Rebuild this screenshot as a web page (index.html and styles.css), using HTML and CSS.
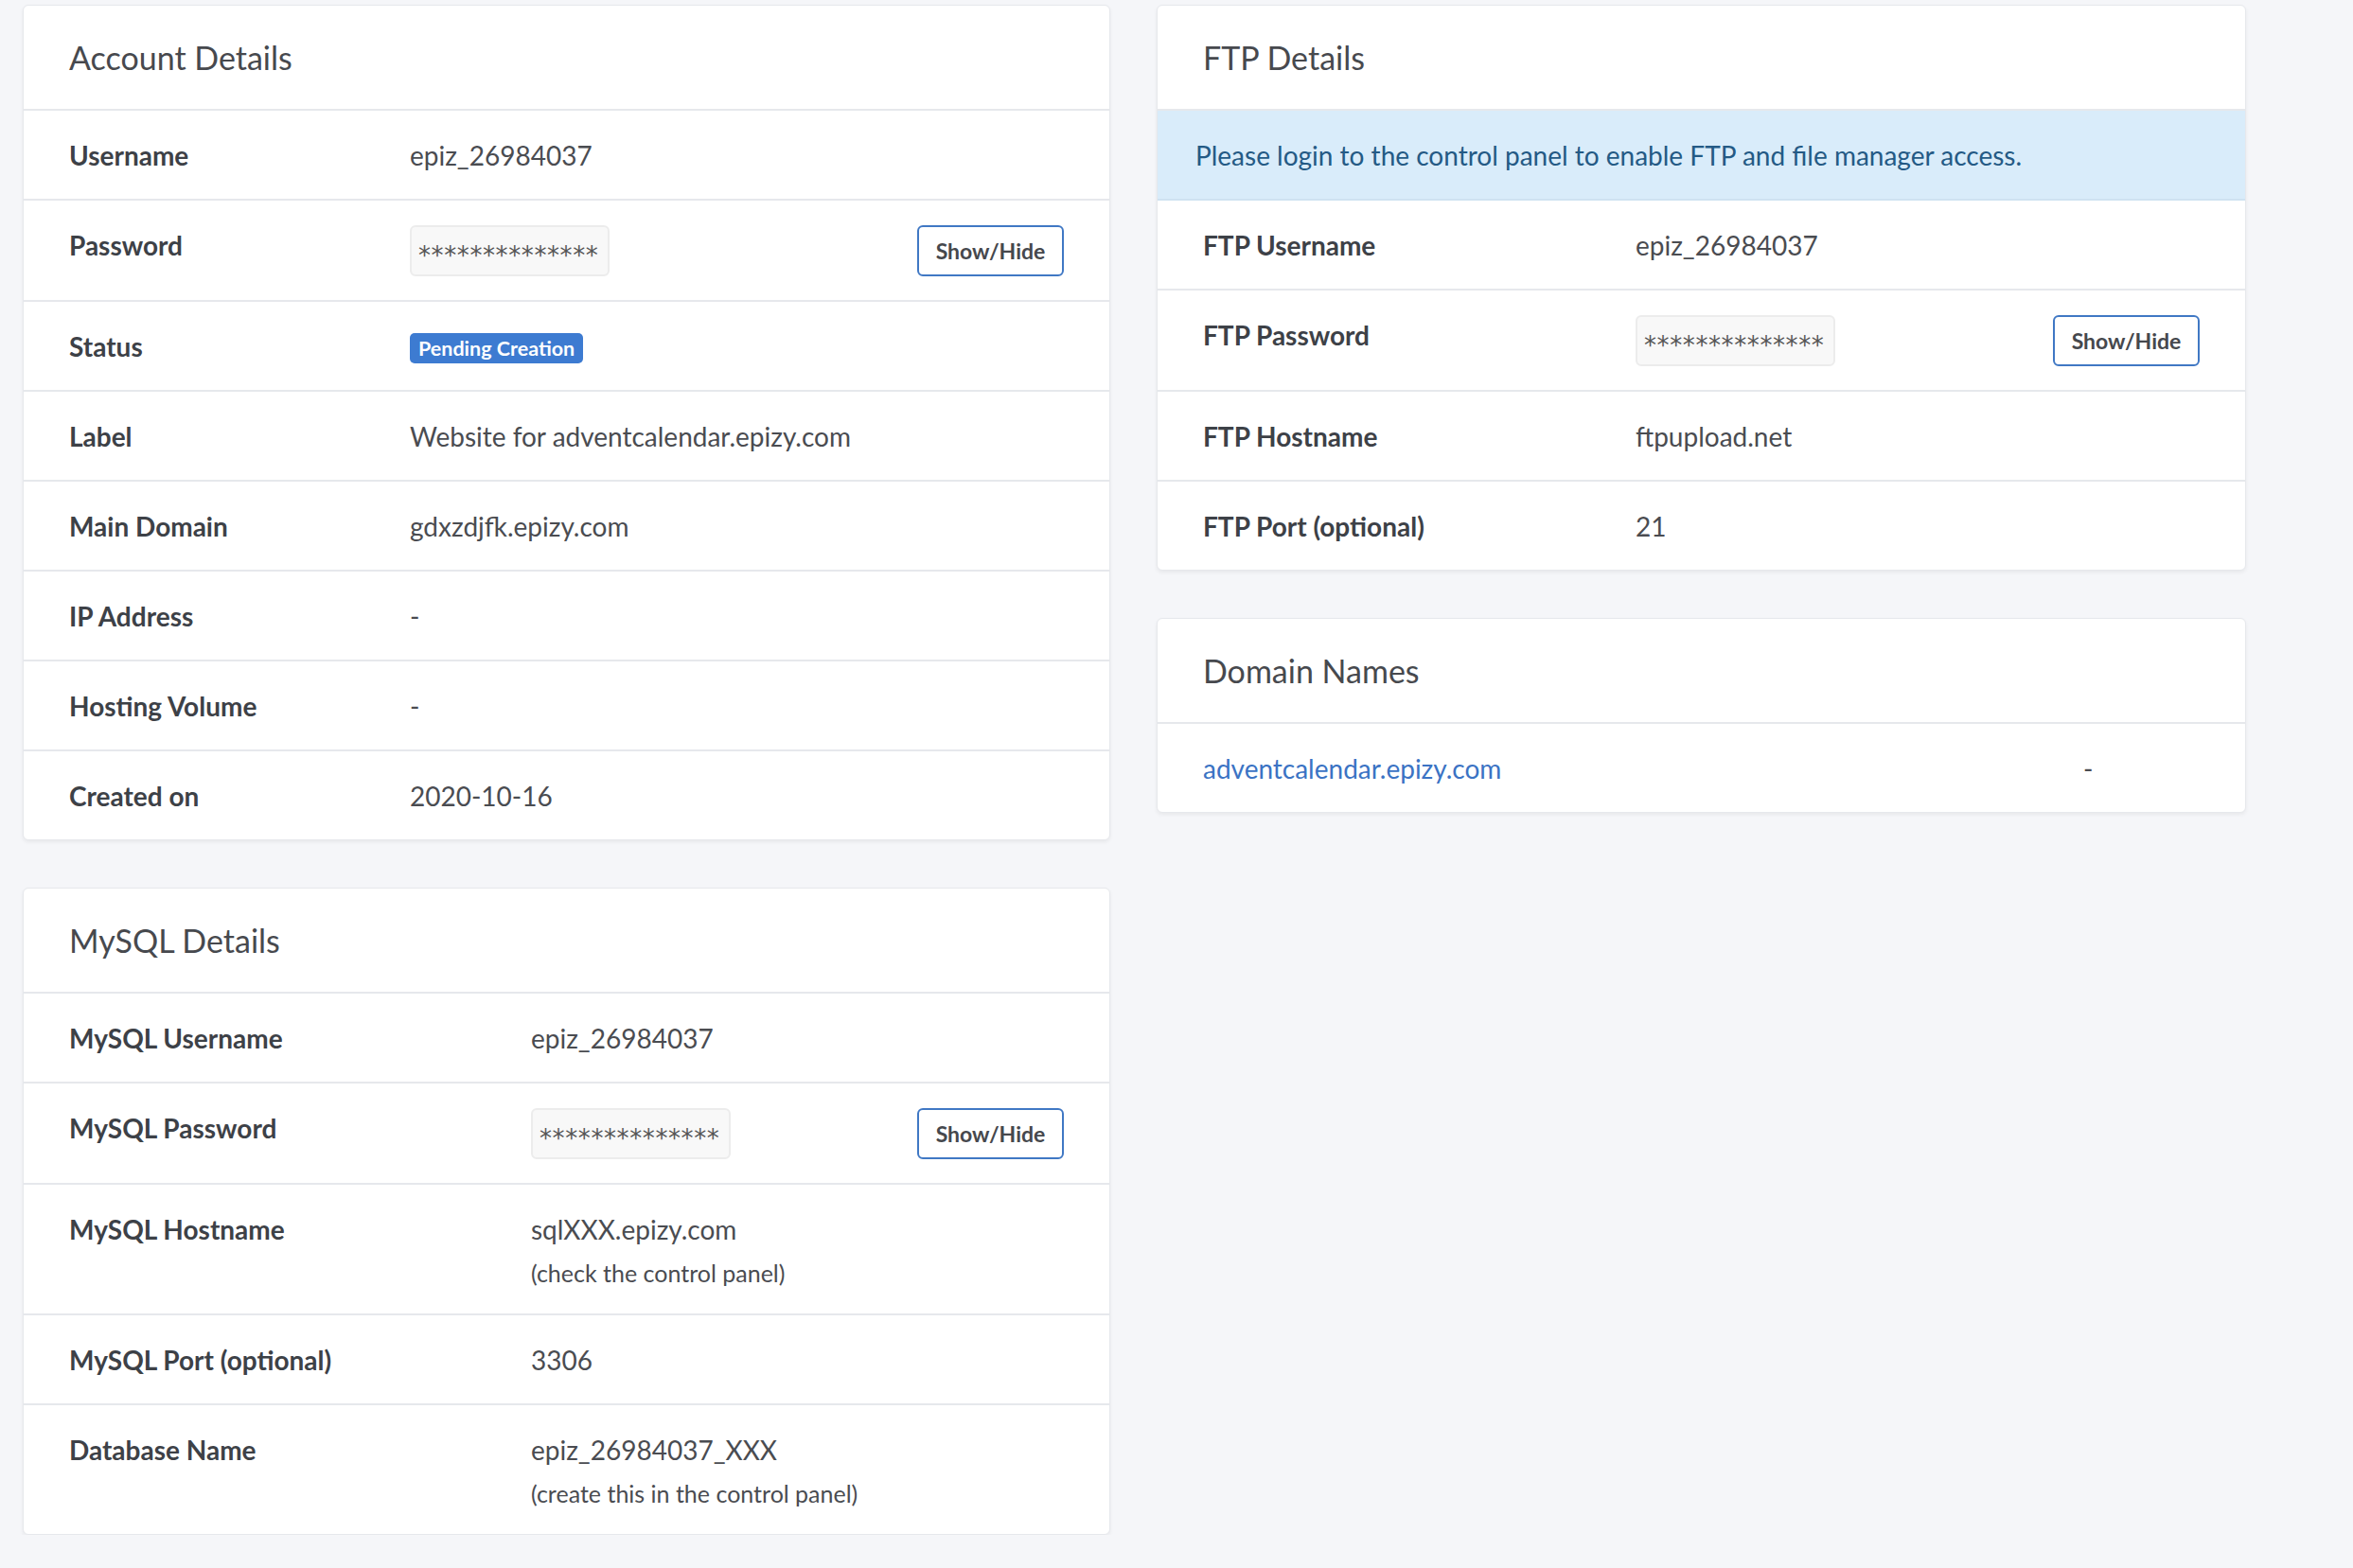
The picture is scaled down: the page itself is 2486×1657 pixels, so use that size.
FILE: index.html
```html
<!DOCTYPE html>
<html lang="en">
<head>
<meta charset="utf-8">
<title>Account</title>
<link rel="stylesheet" href="styles.css">
</head>
<body>
<div class="page">
  <div class="col">
    <section class="card">
      <div class="card-header"><h3>Account Details</h3></div>
      <div class="rows acct">
        <div class="row split"><div class="label">Username</div><div class="value">epiz_26984037</div></div>
        <div class="row"><div class="label">Password</div><div class="value"><span class="secret">**************</span></div><div class="action"><button class="btn">Show/Hide</button></div></div>
        <div class="row"><div class="label">Status</div><div class="value"><span class="badge">Pending Creation</span></div></div>
        <div class="row"><div class="label">Label</div><div class="value">Website for adventcalendar.epizy.com</div></div>
        <div class="row"><div class="label">Main Domain</div><div class="value">gdxzdjfk.epizy.com</div></div>
        <div class="row"><div class="label">IP Address</div><div class="value">-</div></div>
        <div class="row"><div class="label">Hosting Volume</div><div class="value">-</div></div>
        <div class="row"><div class="label">Created on</div><div class="value">2020-10-16</div></div>
      </div>
    </section>
    <section class="card">
      <div class="card-header"><h3>MySQL Details</h3></div>
      <div class="rows mysql">
        <div class="row split"><div class="label">MySQL Username</div><div class="value">epiz_26984037</div></div>
        <div class="row"><div class="label">MySQL Password</div><div class="value"><span class="secret">**************</span></div><div class="action"><button class="btn">Show/Hide</button></div></div>
        <div class="row"><div class="label">MySQL Hostname</div><div class="value">sqlXXX.epizy.com<div class="note">(check the control panel)</div></div></div>
        <div class="row"><div class="label">MySQL Port (optional)</div><div class="value">3306</div></div>
        <div class="row"><div class="label">Database Name</div><div class="value">epiz_26984037_XXX<div class="note">(create this in the control panel)</div></div></div>
      </div>
    </section>
  </div>
  <div class="col">
    <section class="card">
      <div class="card-header"><h3>FTP Details</h3></div>
      <div class="alert">Please login to the control panel to enable FTP and file manager access.</div>
      <div class="rows ftp">
        <div class="row split"><div class="label">FTP Username</div><div class="value">epiz_26984037</div></div>
        <div class="row"><div class="label">FTP Password</div><div class="value"><span class="secret">**************</span></div><div class="action"><button class="btn">Show/Hide</button></div></div>
        <div class="row"><div class="label">FTP Hostname</div><div class="value">ftpupload.net</div></div>
        <div class="row"><div class="label">FTP Port (optional)</div><div class="value">21</div></div>
      </div>
    </section>
    <section class="card">
      <div class="card-header"><h3>Domain Names</h3></div>
      <div class="rows domains">
        <div class="row"><div class="label"><a href="#" class="link">adventcalendar.epizy.com</a></div><div class="value">-</div></div>
      </div>
    </section>
  </div>
</div>
</body>
</html>
```

FILE: styles.css
```css
html, body {
  margin: 0;
  padding: 0;
  background: #f5f6f9;
}
body {
  font-family: "Source Sans Pro", Lato, "Noto Sans", sans-serif;
  font-size: 28px;
  line-height: 42px;
  color: #46484d;
}
.page {
  display: grid;
  grid-template-columns: 1149px 1151px;
  column-gap: 49px;
  padding: 5px 0 0 24px;
  align-items: start;
}
.col {
  display: flex;
  flex-direction: column;
  gap: 50px;
}
.card {
  background: #fff;
  border: 1px solid #e6e8ec;
  border-radius: 6px;
  box-shadow: 0 2px 4px rgba(0, 0, 0, 0.06);
  overflow: hidden;
}
.card-header {
  padding: 34px 48px 34px 48px;
  border-bottom: 2px solid #e6e8ec;
}
.card-header h3 {
  margin: 0;
  font-size: 34px;
  line-height: 41px;
  font-weight: 400;
  color: #47494e;
}
.alert {
  background: #d9ecfa;
  color: #245a85;
  padding: 26px 40px 25px 40px;
  border-bottom: 2px solid #cfe2f1;
  font-size: 28px;
  line-height: 42px;
}
.row {
  display: grid;
  grid-template-columns: var(--lw) 1fr auto;
  align-items: start;
  border-bottom: 2px solid #e6e8ec;
}
.row:last-child {
  border-bottom: none;
}
.acct { --lw: 408px; }
.mysql { --lw: 536px; }
.ftp { --lw: 505px; }
.domains { --lw: 978px; }
.label {
  padding: 26px 0 25px 48px;
  font-weight: 700;
  color: #3d4147;
}
.value {
  padding: 26px 0 25px 0;
  color: #4a4c51;
}
.action {
  padding: 26px 48px 25px 0;
}
.secret {
  display: inline-block;
  box-sizing: border-box;
  height: 54px;
  width: 211px;
  padding: 0 7px;
  background: #f8f8f8;
  border: 2px solid #ececec;
  border-radius: 6px;
  font-family: "DejaVu Sans", sans-serif;
  font-size: 26px;
  line-height: 60px;
  letter-spacing: 0.6px;
  color: #555;
  vertical-align: top;
  overflow: hidden;
  white-space: nowrap;
}
.btn {
  display: block;
  box-sizing: border-box;
  width: 155px;
  height: 54px;
  background: #fff;
  border: 2px solid #4078c4;
  border-radius: 6px;
  font-family: inherit;
  font-size: 23px;
  font-weight: 700;
  color: #46484d;
  padding: 0;
}
.badge {
  display: inline-block;
  background: #3d7bd1;
  color: #fff;
  font-size: 21.5px;
  font-weight: 700;
  line-height: 32px;
  padding: 0 9px;
  border-radius: 5px;
  vertical-align: 1px;
}
.note {
  font-size: 25px;
  line-height: 36px;
  margin-top: 7px;
}
.link {
  color: #3b73c4;
  text-decoration: none;
  font-weight: 400;
}
.domains .label {
  font-weight: 400;
}
```
